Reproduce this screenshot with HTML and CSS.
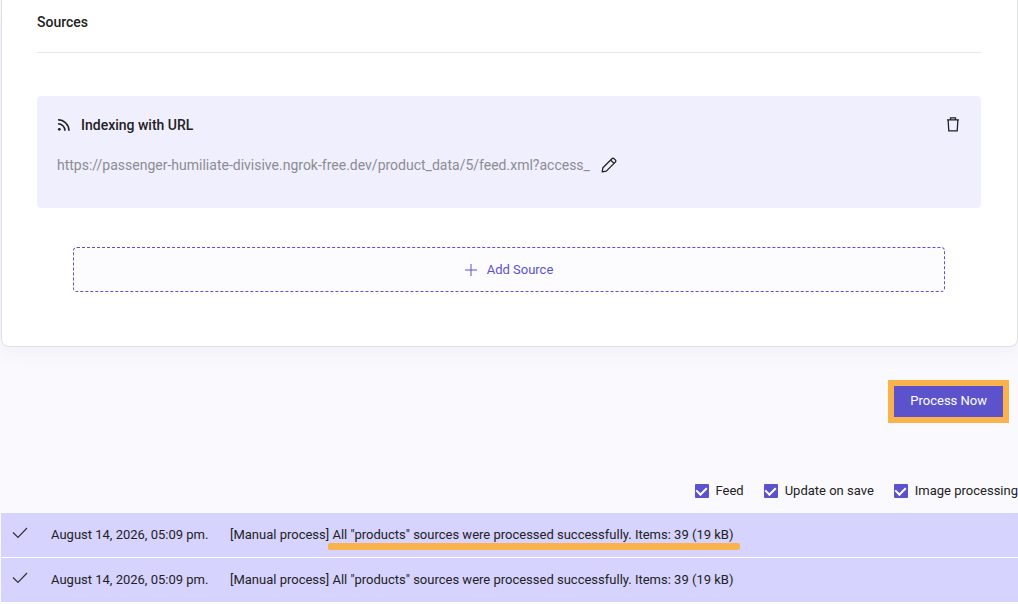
FILE: index.html
```html
<!DOCTYPE html>
<html lang="en">
<head>
    <meta charset="UTF-8">
    <meta name="viewport" content="width=device-width, initial-scale=1.0">
    <title>Sources</title>
    <link rel="stylesheet" href="styles.css">
</head>
<body>
    <!-- Sources card -->
    <section class="card">
        <h2 class="card-title">Sources</h2>

        <div class="source">
            <div class="source-header">
                <svg class="source-icon" width="14" height="14" viewBox="0 0 14 14" fill="none" stroke="#222" stroke-width="1.6">
                    <path d="M1 1.8a11 11 0 0 1 11 11M1 5.7a7 7 0 0 1 7 7"/>
                    <circle cx="2.3" cy="11.3" r="1.4" fill="#222" stroke="none"/>
                </svg>
                <h3>Indexing with URL</h3>
                <button type="button" class="icon-btn" aria-label="Delete source">
                    <svg width="16" height="16" viewBox="0 0 16 16" fill="none" stroke="#222" stroke-width="1.3">
                        <path d="M2 2.8h12M5.5 2.8v-2h5v2M3.1 2.8l.7 11h8.4l.7-11"/>
                    </svg>
                </button>
            </div>
            <div class="source-url">
                <span class="url-text">https://passenger-humiliate-divisive.ngrok-free.dev/product_data/5/feed.xml?access_</span>
                <button type="button" class="icon-btn" aria-label="Edit URL">
                    <svg width="16" height="16" viewBox="0 0 16 16" fill="none" stroke="#222" stroke-width="1.3" stroke-linejoin="round">
                        <path d="M1.2 14.8l.7-4.1 9-9a1.6 1.6 0 0 1 2.2 0l1.2 1.2a1.6 1.6 0 0 1 0 2.2l-9 9zM9.6 3l3.4 3.4"/>
                    </svg>
                </button>
            </div>
        </div>

        <button type="button" class="add-source-btn">
            <svg width="12" height="12" viewBox="0 0 12 12" stroke="#5b52cc" stroke-width="1">
                <path d="M6 0v12M0 6h12"/>
            </svg>
            Add Source
        </button>
    </section>

    <div class="actions">
        <button type="button" class="process-btn">Process Now</button>
    </div>

    <!-- Log filters -->
    <div class="filters">
        <label><input type="checkbox" checked>Feed</label>
        <label><input type="checkbox" checked>Update on save</label>
        <label><input type="checkbox" checked>Image processing</label>
    </div>

    <!-- Process log -->
    <table class="log">
        <tbody>
            <tr>
                <td class="log-status">
                    <svg width="16" height="12" viewBox="0 0 16 12" fill="none" stroke="#333" stroke-width="1.2"><path d="M1 5.5l5 5L15 1"/></svg>
                </td>
                <td class="log-date">August 14, 2026, 05:09 pm.</td>
                <td>[Manual process] <span class="marked">All "products" sources were processed successfully. Items: 39 (19 kB)</span></td>
            </tr>
            <tr>
                <td class="log-status">
                    <svg width="16" height="12" viewBox="0 0 16 12" fill="none" stroke="#333" stroke-width="1.2"><path d="M1 5.5l5 5L15 1"/></svg>
                </td>
                <td class="log-date">August 14, 2026, 05:09 pm.</td>
                <td>[Manual process] All "products" sources were processed successfully. Items: 39 (19 kB)</td>
            </tr>
        </tbody>
    </table>
</body>
</html>
```

FILE: styles.css
```css
* {
    margin: 0;
    padding: 0;
    box-sizing: border-box;
}

body {
    font-family: Roboto, "Liberation Sans", sans-serif;
    font-size: 13px;
    line-height: 20px;
    color: #222;
    background-color: #f9f9fe;
    padding-left: 1px;
}

button {
    font: inherit;
    cursor: pointer;
}

svg {
    display: block;
}

/* Sources card */
.card {
    background-color: #fff;
    border: 1px solid #dfdfe8;
    border-top: none;
    border-radius: 0 0 8px 8px;
    padding: 12px 36px 54px 35px;
    box-shadow: 0 4px 20px rgba(60, 60, 110, 0.06);
}

.card-title {
    font-size: 14px;
    font-weight: 500;
    padding-bottom: 20px;
    border-bottom: 1px solid #e6e6e6;
    margin-bottom: 43px;
}

.source {
    background-color: #f0effe;
    border-radius: 4px;
    padding: 18px 20px 32px;
}

.source-header {
    display: flex;
    align-items: center;
    gap: 10px;
    margin-bottom: 18px;
}

.source-header h3 {
    flex: 1;
    font-size: 14px;
    line-height: 22px;
    font-weight: 500;
}

.icon-btn {
    background: none;
    border: none;
}

.source-url {
    display: flex;
    align-items: center;
    gap: 3px;
    height: 22px;
}

.url-text {
    min-width: 541px;
    font-size: 14px;
    color: #8c8c92;
}

.add-source-btn {
    display: flex;
    align-items: center;
    justify-content: center;
    gap: 10px;
    width: calc(100% - 72px);
    height: 45px;
    margin: 39px 36px 0;
    color: #5b52cc;
    background-color: #fcfcff;
    border: 1px dashed #5b52cc;
    border-radius: 4px;
}

/* Process button */
.actions {
    display: flex;
    justify-content: flex-end;
    padding: 33px 9px 58px;
}

.process-btn {
    padding: 5px 16px 6px;
    color: #fff;
    background-color: #5b52cc;
    border: none;
    outline: 6px solid #fab34c;
    margin: 6px;
}

/* Filters */
.filters {
    display: flex;
    justify-content: flex-end;
    gap: 20px;
    margin-bottom: 12px;
}

.filters label {
    display: flex;
    align-items: center;
    gap: 7px;
}

.filters input {
    appearance: none;
    display: flex;
    justify-content: center;
    width: 14px;
    height: 14px;
    background-color: #5b52cc;
    border-radius: 1px;
}

.filters input:checked::after {
    content: "";
    width: 5px;
    height: 8px;
    margin-top: 2px;
    border: solid #fff;
    border-width: 0 2px 2px 0;
    transform: translateY(-1px) rotate(45deg);
}

/* Log table */
.log {
    width: 100%;
    border-spacing: 0;
}

.log td {
    height: 45px;
    background-color: #d6d3fe;
    border-bottom: 1px solid #fff;
}

.log .log-status {
    width: 50px;
    padding: 0 0 4px 11px;
}

.log .log-date {
    width: 179px;
}

.marked {
    position: relative;
}

.marked::after {
    content: "";
    position: absolute;
    left: -4px;
    right: -7px;
    bottom: -8px;
    height: 7px;
    border-radius: 2px;
    background-color: #fab34c;
}
```
